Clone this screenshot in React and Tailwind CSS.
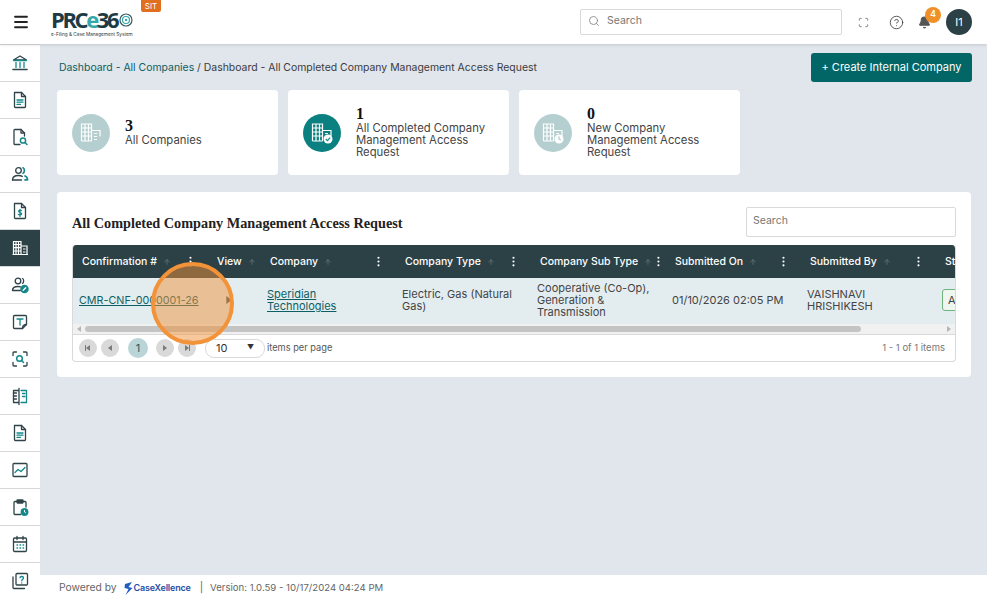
import React from 'react';
import { Menu, Search, Scan, CircleHelp, Bell, ArrowUp, EllipsisVertical } from 'lucide-react';

const D = '#2f4348';
const T = '#15888a';

const Svg = ({ children }) => (
  <svg width="20" height="20" viewBox="0 0 20 20" fill="none" stroke={D} strokeWidth="1.3" strokeLinecap="round" strokeLinejoin="round">{children}</svg>
);
const Doc = ({ children }) => (
  <>
    <path d="M4.5 2.5h7l4 4v10.2a.8.8 0 0 1-.8.8H5.3a.8.8 0 0 1-.8-.8z" />
    <path d="M11.5 2.5v4h4" />
    {children}
  </>
);

const sideIcons = [
  <Svg><path d="M3.5 7 10 3l6.500 4z" /><path d="M3.500 7.500h13M6 9.500v5M10 9.500v5M14 9.500v5" stroke={T} /><path d="M3 16.500h14" strokeWidth="1.600" /></Svg>,
  <Svg><Doc><path d="M7 10h6M7 12.200h6M7 14.400h3.500" stroke={T} /></Doc></Svg>,
  <Svg><path d="M10 17.500H4.800a.8.8 0 0 1-.8-.8V3.300a.8.8 0 0 1 .8-.8h6.200l3.500 3.500v3" /><path d="M11 2.500V6h3.500" /><circle cx="13" cy="13.500" r="2.600" stroke={T} strokeWidth="1.500" /><path d="m15 15.500 2 2" stroke={T} strokeWidth="1.500" /></Svg>,
  <Svg><circle cx="8.500" cy="6.500" r="2.800" /><path d="M2.500 16c0-3 2.500-4.500 6-4.500 1.500 0 2.800.3 3.800.9" /><path d="M2.500 16h9" /><path d="M13 3.800c1.800.6 1.800 4.800 0 5.400M15 12c1.600.6 2.500 1.800 2.500 3.800h-2.500" stroke={T} strokeWidth="1.700" /></Svg>,
  <Svg><Doc><path d="M11.500 9.600c-.5-.6-2.900-.8-2.900.7s3 .9 3 2.500c0 1.500-2.600 1.400-3.300.6M10 8.500v7" stroke={T} /></Doc></Svg>,
  <svg width="20" height="20" viewBox="0 0 20 20" fill="none" stroke="#fff" strokeWidth="1.200"><path d="M3.500 16.500V3.500h7.500v13zM11 8h6v8.500h-6M2.500 16.500h15.500" /><path d="M3.500 6.500H11M3.500 9.700H11M3.500 13H11M6 3.500v13M8.500 3.500v13M13 11h2.500M13 14h2.500" /></svg>,
  <Svg><circle cx="8" cy="6" r="2.800" /><path d="M2.500 15.500h8M2.500 15.500c0-2.800 2.400-4 5.500-4 1 0 1.800.1 2.500.4" /><path d="M12.500 3.500c1.500.6 1.500 4.200 0 4.800" /><circle cx="14.500" cy="14" r="3.600" fill={T} stroke={T} /><path d="m13.200 15.300 2.500-2.500" stroke="#fff" /></Svg>,
  <Svg><path d="M16.500 12.500v-8a1 1 0 0 0-1-1h-11a1 1 0 0 0-1 1v11a1 1 0 0 0 1 1h8z" /><path d="M12.500 16.500c0-3 1-4 4-4" /><path d="M7 7h6M10 7v6" stroke={T} /></Svg>,
  <Svg><path d="M3 6.500V4a1 1 0 0 1 1-1h2.500M13.500 3H16a1 1 0 0 1 1 1v2.500M3 13.500V16a1 1 0 0 0 1 1h2.500M13.500 17H16a1 1 0 0 0 1-1v-2.500" /><circle cx="9.500" cy="9.500" r="2.800" stroke={T} strokeWidth="1.500" /><path d="m11.500 11.500 2 2" stroke={T} strokeWidth="1.500" /></Svg>,
  <Svg><path d="M9 4.500H3.500v12H9M9 2.500v16" /><path d="M3.500 7h3M3.500 10h3M3.500 13h3" /><path d="M11 4.500h5.500v12H11" stroke={T} /><path d="M12.500 7.500h2.500M12.500 10.500h2.500" stroke={T} /></Svg>,
  <Svg><Doc><path d="M7 10h6M7 12.200h6M7 14.400h3.500" stroke={T} /></Doc></Svg>,
  <Svg><rect x="3" y="3.500" width="14" height="13" rx="1" /><path d="m5 12.500 3-3 3 2 4-4" stroke={T} /></Svg>,
  <Svg><path d="M6.500 4.500H5a1 1 0 0 0-1 1v11a1 1 0 0 0 1 1h5.500M13.500 4.500H15a1 1 0 0 1 1 1V10" /><rect x="7" y="3" width="6" height="3" rx=".5" fill={D} /><circle cx="14.500" cy="15" r="3.300" fill={T} stroke={T} /><path d="M14.500 13.500V15l1 .7" stroke="#fff" strokeWidth="1" /></Svg>,
  <Svg><rect x="3.500" y="4" width="13" height="13.500" rx="1.200" /><path d="M3.500 8h13M7 2.500v3M13 2.500v3" /><path d="M7 11h.6M10 11h.6M13 11h.6M7 14h.6M10 14h.6M13 14h.6" stroke={T} /></Svg>,
  <Svg><rect x="6" y="2.500" width="11.500" height="11.500" rx="1" /><path d="M3 6v10.500a1 1 0 0 0 1 1h10.500" /><path d="M10 6.500c.3-1.500 3.500-1.300 3.500.4 0 1.400-1.700 1.300-1.700 2.900M11.800 11.800v.2" stroke={T} /></Svg>,
];

const CardIcon = ({ badge }) => (
  <svg width="24" height="24" viewBox="0 0 24 24" fill="none" stroke="#fff" strokeWidth="1.200">
    <path d="M2.500 20V3h10v17M12.500 9.500H21v6M2.500 20h10" />
    <path d="M2.500 7h10M2.500 11h10M2.500 15h10M6 3v17M9.500 3v17M15 12.500h3" />
    {badge === 'check' && <><circle cx="18" cy="18" r="4.500" fill="#fff" stroke="none" /><path d="m15.800 18 1.600 1.600 2.800-3" stroke="#15888a" strokeWidth="1.200" /></>}
    {badge === 'clock' && <><circle cx="18" cy="18" r="4.500" fill="#fff" stroke="none" /><path d="M18 15.500V18l1.800 1" stroke="#a9c9cb" strokeWidth="1.200" /></>}
    {!badge && <path d="M15 15.500h3M15 18.500h3" />}
  </svg>
);

const cards = [
  { n: '3', label: ['All Companies'], bg: 'bg-[#b5cfd1]' },
  { n: '1', label: ['All Completed Company', 'Management Access', 'Request'], bg: 'bg-[#0b8080]', badge: 'check' },
  { n: '0', label: ['New Company', 'Management Access', 'Request'], bg: 'bg-[#b5cfd1]', badge: 'clock' },
];

// widths follow the reference's column grid
const cols = [
  { name: 'Confirmation #', w: 'w-[135px]', menu: 'mr-[10px]' },
  { name: 'View', w: 'w-[53px]' },
  { name: 'Company', w: 'w-[135px]', menu: 'mr-[10px]' },
  { name: 'Company Type', w: 'w-[135px]', menu: 'mr-[10px]' },
  { name: 'Company Sub Type', w: 'w-[135px]', menu: 'mr-[0px]' },
  { name: 'Submitted On', w: 'w-[135px]', menu: 'mr-[10px]' },
  { name: 'Submitted By', w: 'w-[135px]', menu: 'mr-[10px]' },
  { name: 'Status', w: 'w-[135px]', menu: 'mr-[10px]' },
];

const PageBtn = ({ children }) => (
  <div className="flex h-[18px] w-[18px] items-center justify-center rounded-full bg-[#d9d9d9] text-[#7a7a7a]">{children}</div>
);
const Tri = ({ left, bar, size = 6 }) => (
  <svg width={size} height={size} viewBox="0 0 6 6" fill="currentColor">
    {left ? <path d="M5 0v6L1 3z" /> : <path d="M1 0v6l4-3z" />}
    {bar && (left ? <path d="M0 0h1v6H0z" /> : <path d="M5 0h1v6H5z" />)}
  </svg>
);

export default function App() {
  return (
    <div className="relative flex h-[599px] w-[987px] flex-col overflow-hidden bg-[#e1e5ec] font-[Inter,sans-serif] text-[#3c3c3c]">
      <header className="z-10 flex h-[44px] shrink-0 items-center bg-white shadow-[0_1px_3px_rgba(0,0,0,0.12)]">
        <div className="flex w-[42px] justify-center"><Menu size={18} strokeWidth={2.4} color="#222" /></div>
        <div className="ml-[9px] flex w-[90px] flex-col self-start pt-[8px]">
          <div className="flex items-center font-['Open_Sans',sans-serif] text-[22px] leading-[23px] font-bold tracking-[-2.4px] text-[#1d3b45]">
            PRC<span className="text-[#35a7a8]">e</span>36
            <svg className="ml-[2px]" width="14" height="16" viewBox="0 0 14 16" fill="none" stroke="#3c5a60" strokeWidth="1.200"><circle cx="7" cy="8" r="6" /><circle cx="7" cy="8" r="3.500" stroke="#35a7a8" /><circle cx="7" cy="8" r="1.200" fill="#35a7a8" stroke="none" /></svg>
          </div>
          <div className="text-[4.7px] leading-[6px] whitespace-nowrap text-[#1d3b45]">e-Filing &amp; Case Management System</div>
        </div>
        <div className="flex h-[12px] w-[20px] items-center justify-center self-start rounded-b-[2px] bg-[#e0701f] text-[8px] text-white">SIT</div>
        <div className="ml-auto flex h-[26px] w-[262px] items-center gap-[7px] rounded-[2px] border border-[#d9d9d9] pb-[2px] pl-[7px] text-[10.5px] text-[#777]">
          <Search size={12} strokeWidth={1.5} color="#777" /> Search
        </div>
        <div className="ml-[15px] flex w-[12px] justify-center"><Scan size={11} strokeWidth={1.5} color="#444" /></div>
        <div className="ml-[20px]"><CircleHelp size={15} strokeWidth={1.4} color="#444" /></div>
        <div className="relative ml-[14px]">
          <Bell size={13} fill="#555" color="#555" />
          <div className="absolute top-[-9px] left-[7px] flex h-[16px] w-[16px] items-center justify-center rounded-full bg-[#ef9029] text-[8.5px] font-semibold text-white">4</div>
        </div>
        <div className="mr-[15px] ml-[15px] flex h-[26px] w-[26px] items-center justify-center rounded-full bg-[#2c4146] text-[11px] text-white">I1</div>
      </header>

      <div className="flex min-h-0 flex-1">
        <nav className="w-[40px] shrink-0 bg-white">
          {sideIcons.map((icon, i) => (
            <div key={i} className={`flex h-[37px] items-center justify-center border-t border-[#d6d9dc] ${i === 5 ? 'border-[#2c4146] bg-[#2c4146]' : ''}`}>{icon}</div>
          ))}
        </nav>

        <div className="flex min-w-0 flex-1 flex-col">
          <main className="flex-1 pt-[9px] pr-[15px] pl-[17px]">
            <div className="flex h-[29px] items-center justify-between pl-[2px]">
              <div className="text-[10.43px] whitespace-nowrap">
                <span className="text-[#0e5f63]">Dashboard - All Companies</span> / Dashboard - All Completed Company Management Access Request
              </div>
              <button className="h-[29px] w-[161px] rounded-[3px] bg-[#036666] text-[11px] text-white">+ Create Internal Company</button>
            </div>

            <div className="mt-[8px] flex gap-[10px]">
              {cards.map((c) => (
                <div key={c.n} className="flex h-[85px] w-[221px] items-center rounded-[4px] bg-white pl-[15px]">
                  <div className={`flex h-[38px] w-[38px] shrink-0 items-center justify-center rounded-full ${c.bg}`}><CardIcon badge={c.badge} /></div>
                  <div className="ml-[15px] pb-[1px]">
                    <div className="font-['Liberation_Serif',serif] text-[16px] leading-[16px] font-bold text-[#111]">{c.n}</div>
                    {c.label.map((l) => <div key={l} className="text-[11.3px] leading-[12px] whitespace-nowrap text-[#444]">{l}</div>)}
                  </div>
                </div>
              ))}
            </div>

            <section className="mt-[17px] mr-[1px] h-[185px] rounded-[4px] bg-white px-[15px] pt-[15px]">
              <div className="flex h-[30px] items-center justify-between">
                <h2 className="mt-[4px] font-['Liberation_Serif',serif] text-[14.25px] font-bold text-[#222]">All Completed Company Management Access Request</h2>
                <div className="flex h-[30px] w-[210px] items-center rounded-[2px] border border-[#d9d9d9] pb-[2px] pl-[6px] text-[10.5px] text-[#777]">Search</div>
              </div>

              <div className="mt-[8px] overflow-hidden rounded-[4px] border border-t-0 border-[#d9d9d9]">
                <div className="-ml-px overflow-hidden">
                  <table className="w-[998px] table-fixed border-collapse">
                    <thead>
                      <tr className="h-[33px] bg-[#2c4146] text-[10.5px] text-white">
                        {cols.map((c) => (
                          <th key={c.name} className={`${c.w} pl-[10px] text-left font-medium`}>
                            <div className="flex items-center whitespace-nowrap">
                              {c.name}
                              <ArrowUp size={8} className="ml-[6px] text-[#6d8085]" />
                              {c.menu && <EllipsisVertical size={13} className={`ml-auto ${c.menu}`} />}
                            </div>
                          </th>
                        ))}
                      </tr>
                    </thead>
                    <tbody>
                      <tr className="h-[46px] bg-[#e3edf0] text-[11px] leading-[12px] text-[#444] [&>td]:pb-[2px]">
                        <td className="pl-[7px]"><span className="text-[10.75px] text-[#0e5f63] underline">CMR-CNF-0000001-26</span></td>
                        <td className="pl-[18px] text-[#555]"><Tri size={8} /></td>
                        <td className="pl-[7px]"><span className="block w-[100px] text-[#0e5f63] underline">Speridian Technologies</span></td>
                        <td className="pr-[8px] pl-[7px]">Electric, Gas (Natural Gas)</td>
                        <td className="pr-[8px] pl-[7px]">Cooperative (Co-Op), Generation &amp; Transmission</td>
                        <td className="pl-[7px] whitespace-nowrap">01/10/2026 02:05 PM</td>
                        <td className="pl-[7px]"><span className="block w-[90px]">VAISHNAVI HRISHIKESH</span></td>
                        <td className="pl-[7px]"><span className="inline-block h-[22px] rounded-[3px] border border-[#6fb57a] bg-[#eef6ef] px-[5px] leading-[20px]">Approved</span></td>
                      </tr>
                    </tbody>
                  </table>
                </div>

                <div className="flex h-[11px] items-center border-b border-[#d9d9d9] bg-[#f1f1f1] px-[3px] text-[#b5b5b5]">
                  <Tri left />
                  <div className="ml-[3px] h-[6px] w-[776px] rounded-full bg-[#c4c4c4]" />
                  <div className="ml-auto"><Tri /></div>
                </div>

                <div className="flex h-[26px] items-center pr-[10px] pl-[6px] text-[9.25px] text-[#555]">
                  <PageBtn><Tri left bar /></PageBtn>
                  <div className="ml-[4px]"><PageBtn><Tri left /></PageBtn></div>
                  <div className="ml-[9px] flex h-[20px] w-[20px] items-center justify-center rounded-full bg-[#b9d5d8] text-[11px] text-[#24595e]">1</div>
                  <div className="ml-[8px]"><PageBtn><Tri /></PageBtn></div>
                  <div className="ml-[4px]"><PageBtn><Tri bar /></PageBtn></div>
                  <div className="ml-[9px] flex h-[19px] w-[60px] items-center justify-between rounded-[9px] border border-[#d9d9d9] px-[10px] text-[11px] text-[#333]">
                    10 <span className="text-[7px]">▼</span>
                  </div>
                  <span className="ml-[2px]">items per page</span>
                  <span className="ml-auto text-[9.5px] text-[#777]">1 - 1 of 1 items</span>
                </div>
              </div>
            </section>
          </main>

          <footer className="flex h-[24px] shrink-0 items-center bg-white pt-[2px] pl-[19px] text-[10.3px] text-[#666]">
            Powered by
            <svg className="ml-[7px]" width="9" height="13" viewBox="0 0 9 13" fill="#1f5fbf"><path d="M8 0 1 2 .5 6l4 1-3 6 7-7-4-1z" /></svg>
            <span className="ml-[1px] text-[9px] font-semibold tracking-[-0.2px] text-[#1f4fa8]">CaseXellence</span>
            <span className="mr-[7px] ml-[9px]">|</span>
            <span className="text-[9.6px]">Version: 1.0.59 - 10/17/2024 04:24 PM</span>
          </footer>
        </div>
      </div>

      {/* recording highlight over the table */}
      <div className="pointer-events-none absolute top-[262px] left-[151px] h-[83px] w-[83px] rounded-full border-[4px] border-[#f29239] bg-[#f0923a]/50" />
    </div>
  );
}
